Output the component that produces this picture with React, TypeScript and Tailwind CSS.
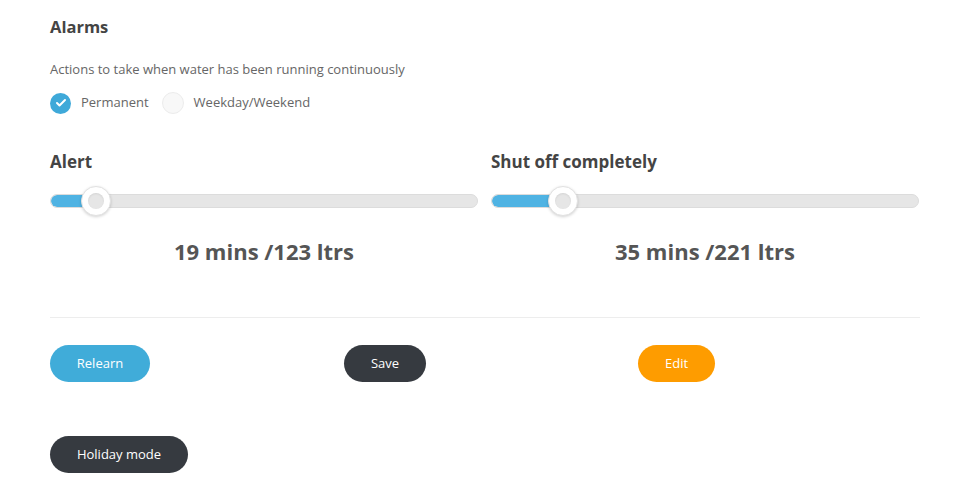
import { Check } from 'lucide-react';

const font = { fontFamily: '"Open Sans", Lato, sans-serif' };

const Slider = ({ fill, thumb }: { fill: number; thumb: number }) => {
  return (
    <div className="relative h-[30px] flex items-center">
      <div className="w-full h-[14px] rounded-full bg-[#e6e6e6] border border-[#dcdcdc] overflow-hidden">
        <div className="h-full bg-[#4fb3e3] rounded-l-full" style={{ width: fill }} />
      </div>
      <div
        className="absolute top-0 w-[30px] h-[30px] rounded-full bg-white border border-[#e2e2e2] shadow-[0_1px_3px_rgba(0,0,0,0.18)] flex items-center justify-center"
        style={{ left: thumb - 15 }}
      >
        <div className="w-[16px] h-[16px] rounded-full bg-[#e6e6e6] shadow-[inset_0_1px_2px_rgba(0,0,0,0.08)]" />
      </div>
    </div>
  );
};

const Column = ({ label, fill, thumb, value }: { label: string; fill: number; thumb: number; value: string }) => {
  return (
    <div className="w-[428px] shrink-0">
      <h3 className="text-[17px] font-bold text-[#444] leading-5">{label}</h3>
      <div className="mt-[14px]">
        <Slider fill={fill} thumb={thumb} />
      </div>
      <p className="mt-[21px] text-center text-[22px] font-bold text-[#555] leading-7">{value}</p>
    </div>
  );
};

const Button = ({ children, className }: { children: string; className: string }) => {
  return (
    <button className={`h-[37px] rounded-full text-white text-[13px] ${className}`}>{children}</button>
  );
};

const App = () => {
  return (
    <div className="min-h-screen bg-white pl-[50px] pr-[40px] pt-[17px]" style={font}>
      <h2 className="text-[16.5px] font-bold text-[#444] leading-5">Alarms</h2>
      <p className="mt-[24px] text-[13px] text-[#666] leading-4">
        Actions to take when water has been running continuously
      </p>
      <div className="mt-[15px] flex items-center text-[13px] text-[#666]">
        <span className="w-[21px] h-[21px] rounded-full bg-[#3fa9d9] flex items-center justify-center">
          <Check size={12} strokeWidth={4} color="white" />
        </span>
        <span className="ml-[10px]">Permanent</span>
        <span className="ml-[13px] w-[22px] h-[22px] rounded-full bg-[#f8f8f8] border border-[#ececec]" />
        <span className="ml-[10px]">Weekday/Weekend</span>
      </div>

      <div className="mt-[38px] flex gap-[13px]">
        <Column label="Alert" fill={40} thumb={46} value="19 mins /123 ltrs" />
        <Column label="Shut off completely" fill={64} thumb={72} value="35 mins /221 ltrs" />
      </div>

      <div className="mt-[52px] w-[870px] border-t border-[#ededed]" />

      <div className="mt-[27px] grid grid-cols-[294px_294px_294px]">
        <div>
          <Button className="w-[100px] bg-[#40acd9]">Relearn</Button>
        </div>
        <div>
          <Button className="w-[82px] bg-[#363a40]">Save</Button>
        </div>
        <div>
          <Button className="w-[77px] bg-[#fe9c00]">Edit</Button>
        </div>
      </div>

      <div className="mt-[54px]">
        <Button className="w-[138px] bg-[#363a40]">Holiday mode</Button>
      </div>
    </div>
  );
};

export default App;
